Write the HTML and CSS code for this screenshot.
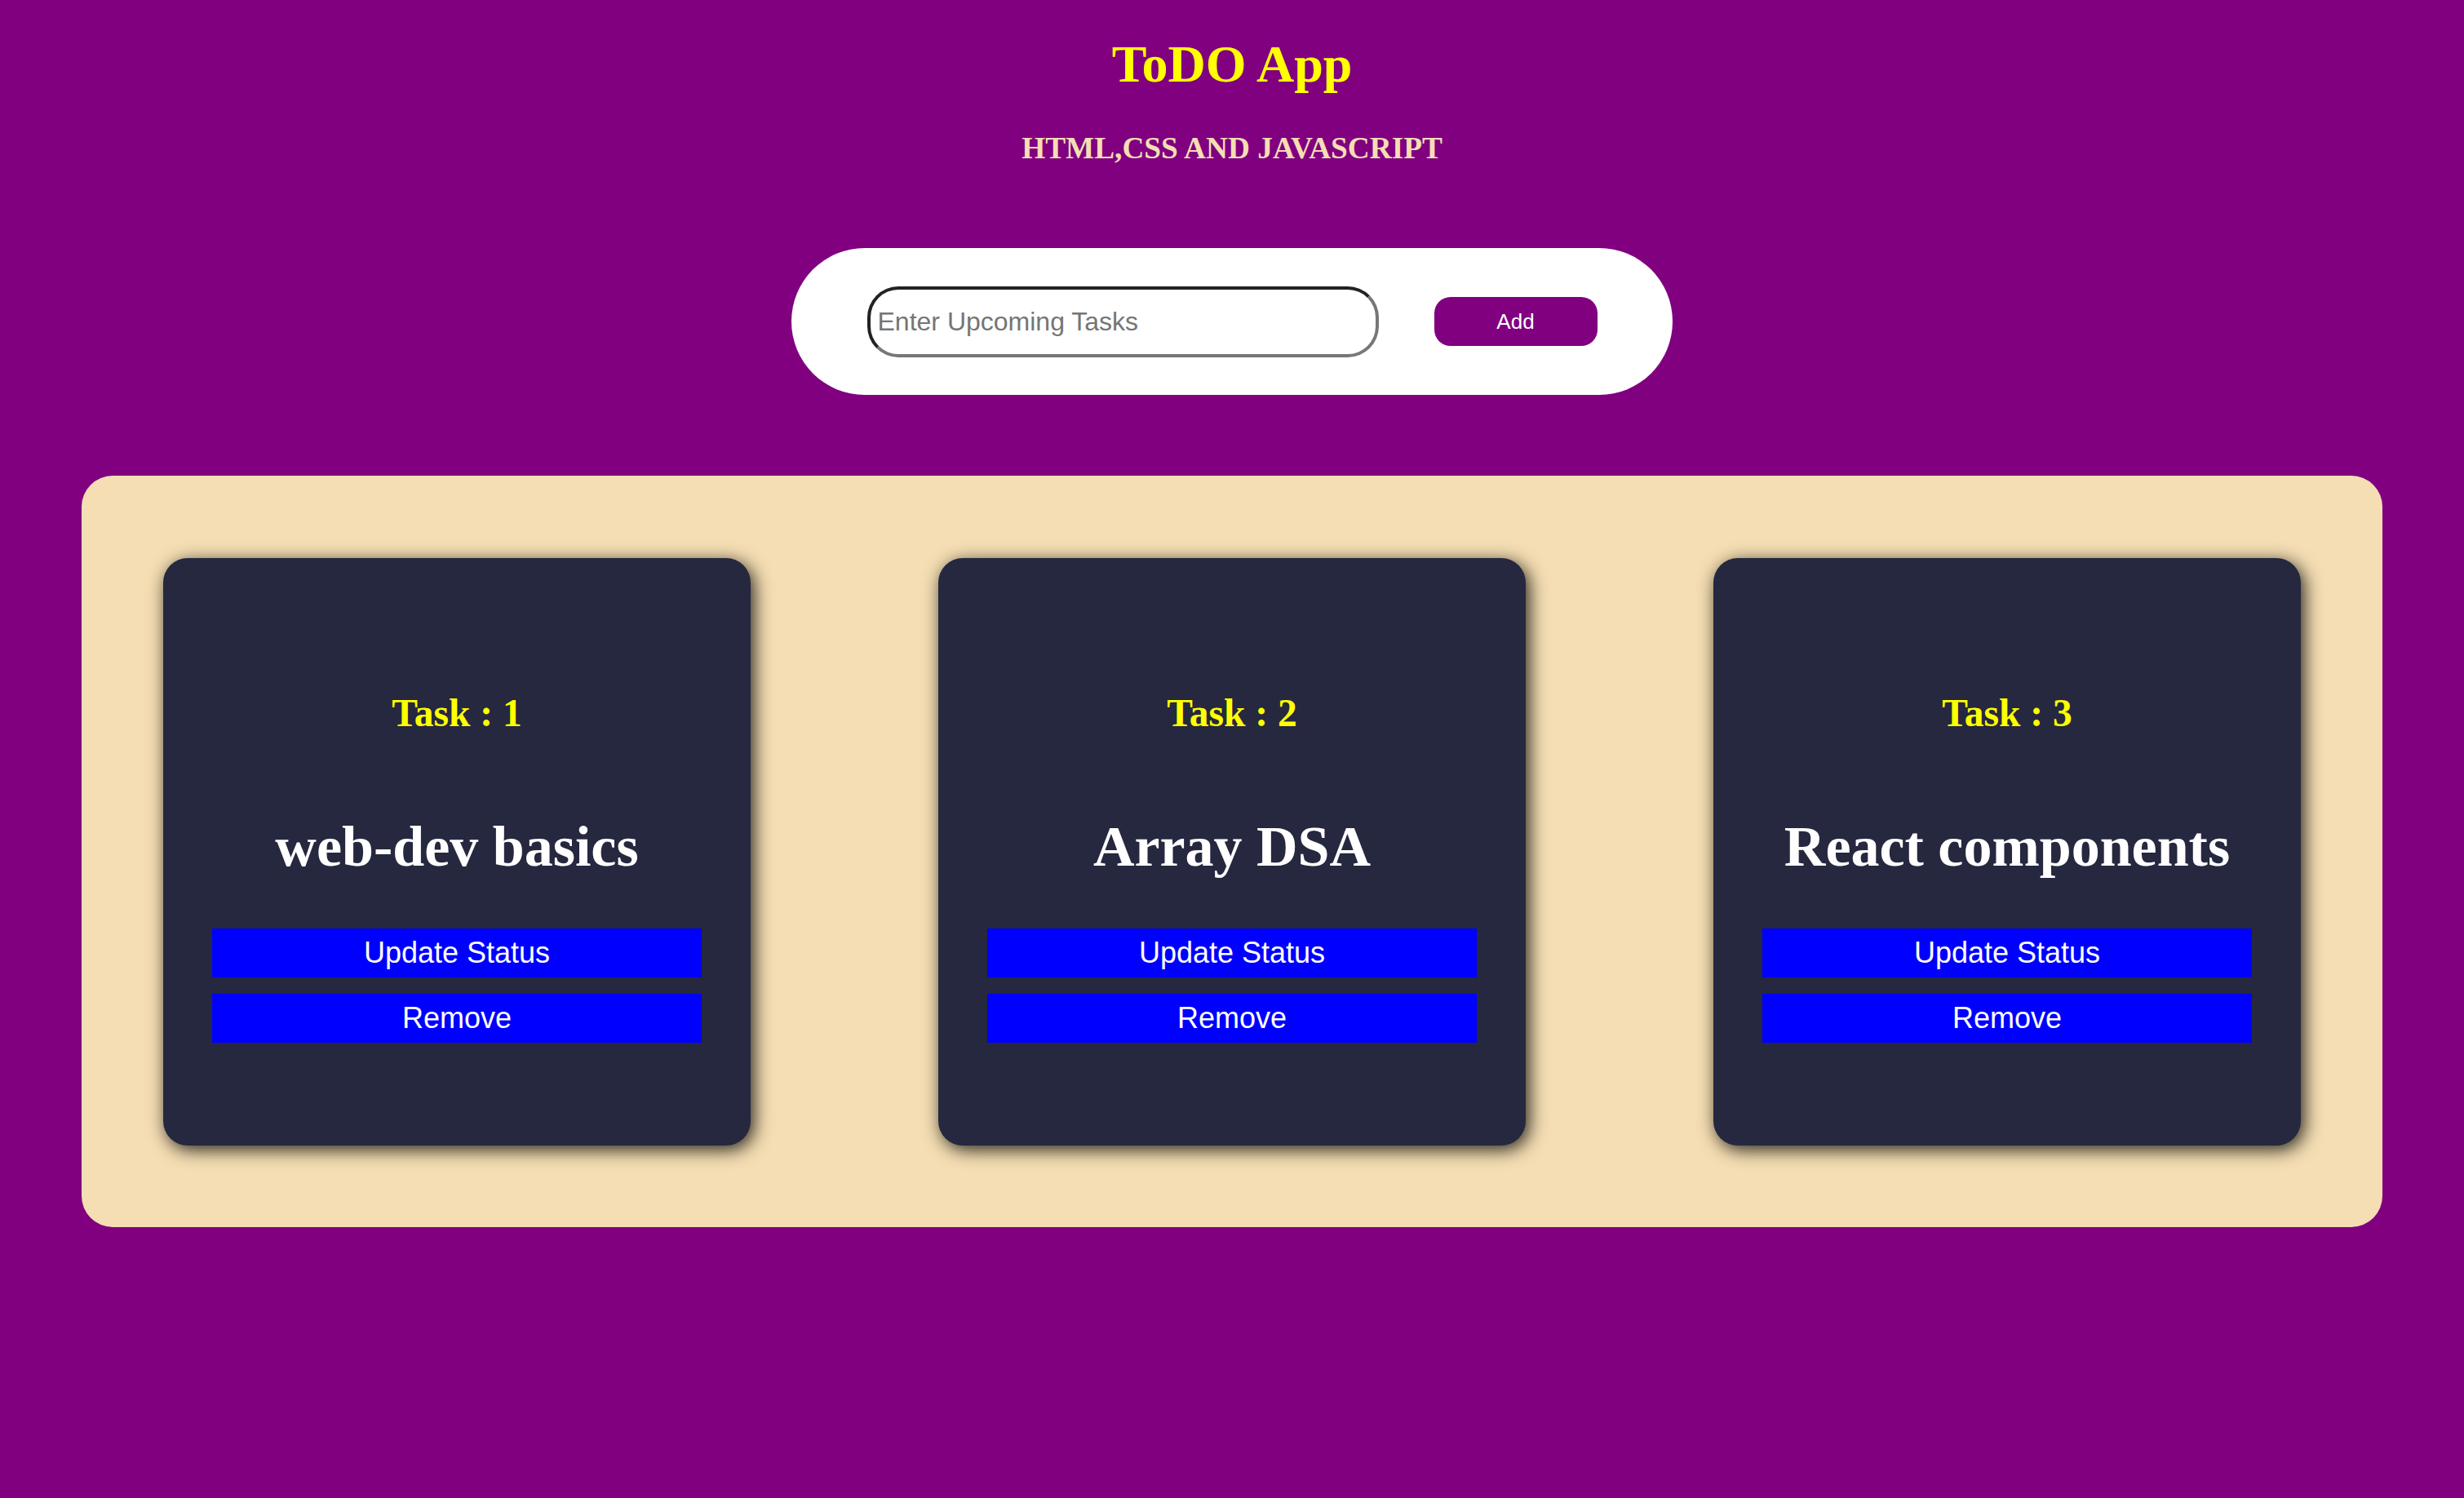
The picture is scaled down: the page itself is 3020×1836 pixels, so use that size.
FILE: index.html
```html
<!DOCTYPE html>
<html lang="en">
<head>
<meta charset="utf-8">
<title>ToDO App</title>
<link rel="stylesheet" href="styles.css">
</head>
<body>
  <header class="header">
    <h1 class="app-title">ToDO App</h1>
    <h3 class="app-subtitle">HTML,CSS AND JAVASCRIPT</h3>
  </header>

  <section class="entry">
    <input class="entry-input" type="text" placeholder="Enter Upcoming Tasks">
    <button class="entry-add">Add</button>
  </section>

  <main class="board">
    <article class="card">
      <h2 class="card-label">Task : 1</h2>
      <h1 class="card-title">web-dev basics</h1>
      <div class="card-actions">
        <button class="card-btn">Update Status</button>
        <button class="card-btn">Remove</button>
      </div>
    </article>
    <article class="card">
      <h2 class="card-label">Task : 2</h2>
      <h1 class="card-title">Array DSA</h1>
      <div class="card-actions">
        <button class="card-btn">Update Status</button>
        <button class="card-btn">Remove</button>
      </div>
    </article>
    <article class="card">
      <h2 class="card-label">Task : 3</h2>
      <h1 class="card-title">React components</h1>
      <div class="card-actions">
        <button class="card-btn">Update Status</button>
        <button class="card-btn">Remove</button>
      </div>
    </article>
  </main>
</body>
</html>
```

FILE: styles.css
```css
* {
  box-sizing: border-box;
}

html, body {
  margin: 0;
  padding: 0;
}

body {
  background: #800080;
  min-height: 100vh;
  font-family: "Liberation Serif", "Times New Roman", serif;
  padding-top: 43px;
}

.header {
  display: flex;
  flex-direction: column;
  align-items: center;
}

.app-title {
  margin: 0;
  font-size: 64px;
  line-height: 72px;
  font-weight: bold;
  color: #ffff00;
}

.app-subtitle {
  margin: 46px 0 0;
  font-size: 37.3px;
  line-height: 42px;
  font-weight: bold;
  color: #f5deb3;
}

.entry {
  width: 1080px;
  height: 180px;
  margin: 101px auto 0;
  background: #ffffff;
  border-radius: 100px;
  display: flex;
  align-items: center;
  justify-content: center;
  gap: 68px;
}

.entry-input {
  width: 627px;
  height: 87px;
  border-style: solid;
  border-width: 4px;
  border-color: #222222 #777777 #777777 #222222;
  border-radius: 38px;
  padding: 0 9px;
  font-family: "Liberation Sans", Arial, sans-serif;
  font-size: 32px;
  color: #222;
  background: #fff;
  outline: none;
}

.entry-input::placeholder {
  color: #757575;
}

.entry-add {
  width: 200px;
  height: 60px;
  border: none;
  border-radius: 20px;
  background: #800080;
  color: #ffffff;
  font-family: "Liberation Sans", Arial, sans-serif;
  font-size: 26px;
  padding: 0;
}

.board {
  margin: 99px 100px 0;
  background: #f5deb3;
  border-radius: 38px;
  padding: 101px 100px 100px;
  display: flex;
  justify-content: space-between;
}

.card {
  width: 720px;
  height: 720px;
  background: #25283f;
  border-radius: 30px;
  box-shadow: 4px 5px 22px rgba(0, 0, 0, 0.85);
  display: flex;
  flex-direction: column;
  align-items: center;
  padding-top: 164px;
}

.card-label {
  margin: 0;
  font-size: 47.5px;
  line-height: 53px;
  font-weight: bold;
  color: #ffff00;
}

.card-title {
  margin: 97px 0 0;
  font-size: 70px;
  line-height: 80px;
  font-weight: bold;
  color: #ffffff;
  white-space: nowrap;
}

.card-actions {
  margin-top: 60px;
  display: flex;
  flex-direction: column;
  gap: 20px;
}

.card-btn {
  width: 600px;
  height: 60px;
  border: none;
  border-radius: 0;
  background: #0000ff;
  color: #ffffff;
  font-family: "Liberation Sans", Arial, sans-serif;
  font-size: 36px;
  padding: 0;
}
```
